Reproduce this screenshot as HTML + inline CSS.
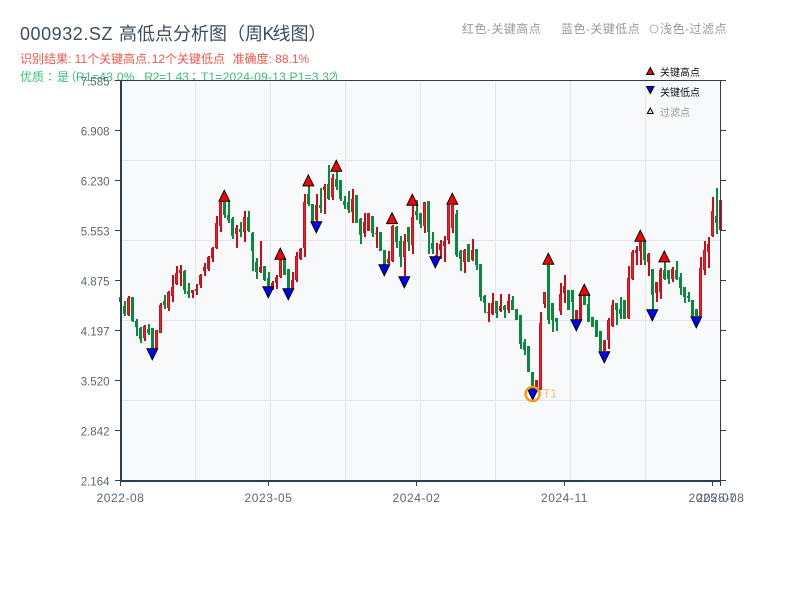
<!DOCTYPE html>
<html><head><meta charset="utf-8"><style>
html,body{margin:0;padding:0;background:#fff}
svg{display:block;font-family:"Liberation Sans","Noto Sans CJK SC",sans-serif}
.tc{font-family:"Noto Sans CJK TC",sans-serif}
</style></head><body>
<svg width="800" height="600" viewBox="0 0 800 600" xmlns="http://www.w3.org/2000/svg">
<rect width="800" height="600" fill="#fff"/>
<g font-size="18" fill="#3d4d5e">
<text x="20" y="40" letter-spacing=".55">000932.SZ</text>
<text x="119" y="40">高低点分析图（周</text>
<text x="262.500" y="40">K</text>
<text x="272.500" y="40">线图）</text>
</g>
<g font-size="12" fill="#f0584a">
<text x="20" y="63">识别结果: 11个关键高点,</text>
<text x="151.700" y="63">12个关键低点</text>
<text x="232.500" y="63">准确度: 88.1%</text>
</g>
<g font-size="12" fill="#35c474">
<text x="20" y="81">优质</text>
<text x="44" y="81" class="tc">：</text>
<text x="57" y="81">是</text>
<text x="64.500" y="81">（</text>
<text x="76" y="81" letter-spacing=".3">R1=43.0%,</text>
<text x="144.300" y="81" letter-spacing="-.2">R2=1.43</text>
<text x="188" y="81" class="tc">；</text>
<text x="201" y="81" letter-spacing=".2">T1=2024-09-13 P1=3.32</text>
<text x="333.500" y="81">）</text>
</g>
<g font-size="12" fill="#999">
<text x="462" y="33" letter-spacing=".45">红色-关键高点</text>
<text x="561" y="33" letter-spacing=".45">蓝色-关键低点</text>
<text x="660" y="33" letter-spacing=".5">浅色-过滤点</text>
</g>
<circle cx="654" cy="29" r="3.900" fill="none" stroke="#aaa" stroke-width=".9"/>

<rect x="120" y="80" width="600" height="400" fill="#f8f9fb"/>
<path d="M195.5 80V480M270.5 80V480M345.5 80V480M420.5 80V480M495.5 80V480M570.5 80V480M645.5 80V480M120 160.5H720M120 240.5H720M120 320.5H720M120 400.5H720" stroke="#e4e6eb" stroke-width="1" fill="none"/>

<!-- wicks -->
<path stroke="#cf0a16" stroke-width="2" fill="none" d="M129 296V316M145 325V341M157 330V349M161 303V333M169 291V311M173 275V302M177 266V285M181 265V286M193 290V298M197 284V295M201 274V288M205 263V276M209 256V271M213 247V262M217 216V249M221 201V232M237 225V248M245 211V242M261 241V273M273 281V290M277 275V289M281 259V278M293 272V289M297 252V282M301 248V260M305 194V257M317 194V222M325 184V214M333 174V200M353 189V223M365 213V237M369 213V231M377 227V248M389 251V264M393 225V262M405 234V276M413 205V254M425 202V233M437 243V260M441 240V259M445 236V262M449 205V244M453 205V233M465 249V273M473 239V261M489 303V322M493 293V315M501 294V312M509 294V313M537 380V390M541 312V390M545 292V308M561 283V315M565 275V303M577 310V320M581 295V320M605 340V351M609 318V349M613 300V327M629 266V319M633 250V280M637 246V265M641 242V265M649 253V276M657 282V302M661 268V299M673 267V282M701 257V316M705 241V275M709 237V268M713 197V237M721 200V230"/>
<path stroke="#088a3c" stroke-width="2" fill="none" d="M121 297V302M125 301V316M133 297V322M137 319V336M141 327V343M149 324V335M153 328V349M165 295V309M185 270V294M189 283V298M225 202V218M229 201V223M233 217V239M241 222V237M249 211V232M253 232V271M257 258V279M265 266V281M269 272V287M285 259V275M289 269V290M309 185V206M313 204V222M321 188V213M329 165V200M337 170V190M341 180V201M345 196V209M349 191V213M357 195V223M361 218V244M373 216V237M381 232V251M385 250V265M397 226V248M401 236V267M409 227V251M417 200V220M421 213V228M429 201V254M433 232V254M457 210V257M461 250V271M469 244V262M477 249V270M481 264V301M485 295V313M497 301V318M505 305V318M513 296V310M517 309V320M521 315V349M525 339V355M529 346V372M533 372V390M549 265V324M553 303V332M557 318V331M569 290V310M573 290V319M585 295V305M589 295V322M593 317V327M597 320V337M601 331V351M617 303V325M621 297V319M625 300V319M645 240V265M653 269V310M665 262V280M669 270V284M677 261V280M681 273V295M685 287V303M689 292V302M693 300V316M697 309V316M717 188V234"/>
<!-- bodies -->
<g transform="translate(-.5 0)">
<path stroke="#088a3c" stroke-width="3" fill="none" d="M121 297V302M125 306V314M133 297V321M137 321V327M141 328V339M149 329V333M153 328V349M165 301V305M185 271V290M189 291V294M225 202V215M229 215V220M233 219V236M241 229V232M249 217V231M253 233V251M257 262V272M265 266V280M269 278V286M285 259V275M289 269V290M309 194V204M313 204V222M321 205V208M329 184V199M337 179V187M341 180V199M345 201V205M349 202V210M357 195V223M361 219V235M373 216V233M381 232V251M385 250V265M397 227V242M401 241V257M409 227V242M417 211V215M421 213V224M429 201V232M433 243V249M457 214V255M461 251V259M469 244V262M477 249V265M481 264V297M485 296V303M497 301V313M505 306V310M513 300V310M517 309V320M521 315V344M525 342V350M529 346V372M533 372V390M549 265V320M553 303V320M557 318V322M569 290V310M573 290V302M585 295V305M589 304V322M593 317V327M597 320V337M601 331V351M617 303V310M621 309V314M625 300V319M645 242V260M653 269V295M665 270V279M669 270V279M677 270V279M681 277V288M685 287V297M689 296V298M693 300V316M697 309V316M717 216V223"/>
<path stroke="#d2101c" stroke-width="3" fill="none" d="M129 298V315M145 326V338M157 330V349M161 305V333M169 292V308M173 287V296M177 273V284M181 270V273M193 290V293M197 289V291M201 275V285M205 267V271M209 257V269M213 248V258M217 223V248M221 202V226M237 228V234M245 217V232M261 267V272M273 283V289M277 277V283M281 260V277M293 280V288M297 256V280M301 249V259M305 202V248M317 205V220M325 187V190M333 178V197M353 199V212M365 222V233M369 213V231M377 233V234M389 259V263M393 226V261M405 241V257M413 217V245M425 202V226M437 255V257M441 244V250M445 241V246M449 205V240M453 205V228M465 250V262M473 250V260M489 312V313M493 303V314M501 306V311M509 301V310M537 380V390M541 323V390M545 292V304M561 294V311M565 286V293M577 310V320M581 295V320M605 340V351M609 320V340M613 305V326M629 278V318M633 252V279M637 250V253M641 242V251M649 254V262M657 282V293M661 270V292M673 269V279M701 268V316M705 250V270M709 244V252M713 211V236M721 200V230"/>
<path stroke="#f01c28" stroke-width="1" fill="none" d="M129 299V314M145 327V337M157 331V348M161 306V332M169 293V307M173 288V295M177 274V283M217 224V247M221 203V225M237 229V233M245 218V231M281 261V276M297 257V279M305 203V247M333 179V196M393 227V260M405 242V256M413 218V244M425 203V225M449 206V239M453 206V227M465 251V261M541 324V389M545 293V303M561 295V310M609 321V339M613 306V325M629 279V317M633 253V278M701 269V315M705 251V269M713 212V235"/>
</g>

<!-- high markers -->
<g fill="#ff0000" stroke="#000" stroke-width="1">
<path d="M224.300 190.300l5.400 10.900h-10.800Z"/>
<path d="M280.300 248.300l5.400 10.900h-10.800Z"/>
<path d="M308.300 175l5.400 10.900h-10.800Z"/>
<path d="M336.300 160.300l5.400 10.900h-10.800Z"/>
<path d="M392 212.700l5.400 10.900h-10.800Z"/>
<path d="M412.300 194.300l5.400 10.900h-10.800Z"/>
<path d="M452.300 193.300l5.400 10.900h-10.800Z"/>
<path d="M548.300 253.300l5.400 10.900h-10.800Z"/>
<path d="M584.300 284.300l5.400 10.900h-10.800Z"/>
<path d="M640.300 230.300l5.400 10.900h-10.800Z"/>
<path d="M664.300 251l5.400 10.900h-10.800Z"/>
</g>
<!-- low markers -->
<g fill="#0000ff" stroke="#000" stroke-width="1">
<path d="M146.900 348.800h10.800l-5.400 10.900Z"/>
<path d="M262.900 286.800h10.800l-5.400 10.900Z"/>
<path d="M282.900 288.800h10.800l-5.400 10.900Z"/>
<path d="M310.900 221.800h10.800l-5.400 10.900Z"/>
<path d="M378.900 264.800h10.800l-5.400 10.900Z"/>
<path d="M398.900 276.800h10.800l-5.400 10.900Z"/>
<path d="M429.900 256.800h10.800l-5.400 10.900Z"/>
<path d="M527.300 388.800h10.800l-5.400 10.900Z"/>
<path d="M570.900 319.800h10.800l-5.400 10.900Z"/>
<path d="M598.900 351.800h10.800l-5.400 10.900Z"/>
<path d="M646.900 309.800h10.800l-5.400 10.900Z"/>
<path d="M690.900 316.800h10.800l-5.400 10.900Z"/>
</g>
<circle cx="532.600" cy="394" r="7" fill="none" stroke="#f39c12" stroke-width="2.500"/>
<text x="543" y="397.500" font-size="12" fill="#f39c12" fill-opacity=".6">T1</text>

<!-- axes -->
<path d="M120 80.500H726M720.500 80V486M115 80.500H120M115 130.500H120M115 180.500H120M115 230.500H120M115 280.500H120M115 330.500H120M115 380.500H120M115 430.500H120M115 480.500H120M720 130.500H726M720 180.500H726M720 230.500H726M720 280.500H726M720 330.500H726M720 380.500H726M720 430.500H726M720 480.500H726M120.500 481V486M268.500 481V486M416.500 481V486M564.500 481V486M712.500 481V486" stroke="#2c3e50" stroke-width="1" fill="none"/>
<path d="M121 80V482M120 481H721" stroke="#2c3e50" stroke-width="2" fill="none"/>

<g font-size="11.5" fill="#5d6673" text-anchor="end">
<text x="109.500" y="85.500">7.585</text>
<text x="109.500" y="135.500">6.908</text>
<text x="109.500" y="185.500">6.230</text>
<text x="109.500" y="235.500">5.553</text>
<text x="109.500" y="285.500">4.875</text>
<text x="109.500" y="335.500">4.197</text>
<text x="109.500" y="385.500">3.520</text>
<text x="109.500" y="435.500">2.842</text>
<text x="109.500" y="485.500">2.164</text>
</g>
<g font-size="12" fill="#5d6673" text-anchor="middle" letter-spacing=".55">
<text x="120.500" y="502">2022-08</text>
<text x="268.500" y="502">2023-05</text>
<text x="416.500" y="502">2024-02</text>
<text x="564.500" y="502">2024-11</text>
<text x="712.500" y="502">2025-07</text>
<text x="720.500" y="502">2025-08</text>
</g>

<!-- legend -->
<path d="M650.300 67.500L654 74.500H646.600Z" fill="#ff0000" stroke="#000" stroke-width="1"/>
<path d="M650.300 93.500L646.600 86.500H654Z" fill="#0000ff" stroke="#000" stroke-width="1"/>
<path d="M650.300 108L653.200 113.500H647.400Z" fill="#ffc8c8" stroke="#000" stroke-width="1"/>
<text x="660" y="76" font-size="10" fill="#111">关键高点</text>
<text x="660" y="96" font-size="10" fill="#111">关键低点</text>
<text x="660" y="116" font-size="10" fill="#999">过滤点</text>
</svg>
</body></html>
